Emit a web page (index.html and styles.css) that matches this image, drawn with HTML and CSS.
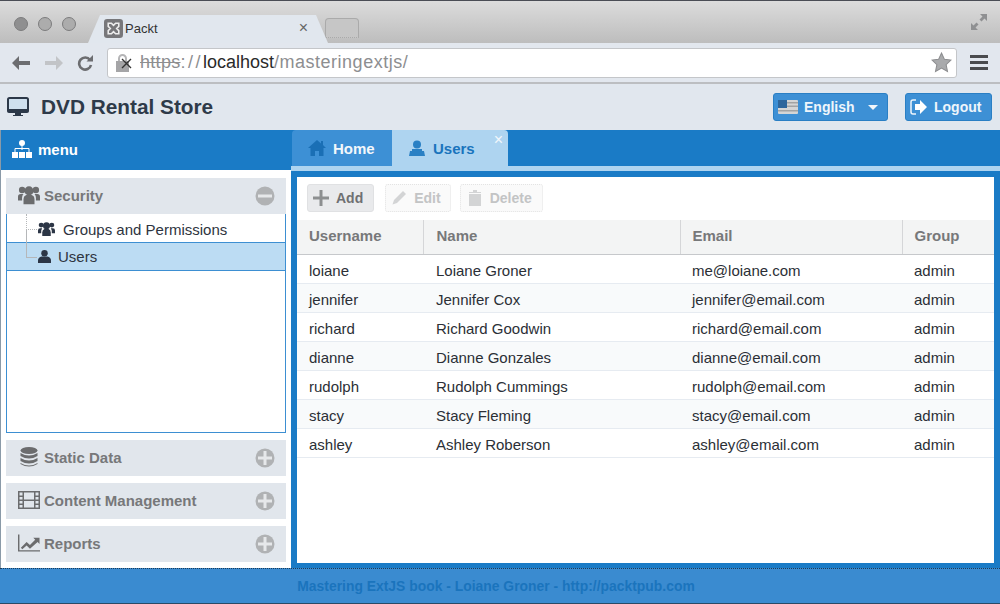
FILE: index.html
```html
<!DOCTYPE html>
<html lang="en">
<head>
    <meta charset="UTF-8">
    <title>Packt</title>
    <link rel="stylesheet" href="styles.css">
</head>
<body>
    <svg class="defs" width="0" height="0">
        <symbol id="i-group" viewBox="0 0 24 20">
            <circle cx="12" cy="5.500" r="5"/>
            <circle cx="4.500" cy="4.500" r="3.500"/>
            <circle cx="19.500" cy="4.500" r="3.500"/>
            <path d="M6 20v-5q0-4 3-5h6q3 1 3 5v5z"/>
            <path d="M0 16v-4q0-3 3-3h3q-2 2-1.500 7zM24 16v-4q0-3-3-3h-3q2 2 1.500 7z"/>
        </symbol>
        <symbol id="i-user" viewBox="0 0 14 14">
            <circle cx="7" cy="3.500" r="3.500"/>
            <path d="M0 14v-3q0-3 4-4h6q4 1 4 4v3z"/>
        </symbol>
        <symbol id="i-plus" viewBox="0 0 20 20">
            <circle cx="10" cy="10" r="9.500" fill="#b0b2b4"/>
            <path d="M8.500 3h3v5.500H17v3h-5.500V17h-3v-5.500H3v-3h5.500z" fill="#e6e8ea"/>
        </symbol>
    </svg>

    <!-- Browser chrome -->
    <div class="tabstrip">
        <div class="lights"><i></i><i></i><i></i></div>
        <div class="browser-tab">
            <svg class="favicon" viewBox="0 0 18 18"><rect width="18" height="18" rx="3" fill="#77777a"/><path d="M4 4h3l2 2 2-2h3v3l-2 2 2 2v3h-3l-2-2-2 2H4v-3l2-2-2-2z" fill="none" stroke="#eee" stroke-width="1.500"/></svg>
            <span class="browser-tab-title">Packt</span>
            <span class="browser-tab-close">×</span>
        </div>
        <div class="new-tab"></div>
        <svg class="fullscreen" viewBox="0 0 18 18"><path d="M10 1h7v7l-2.500-2.500-3 3-2-2 3-3zM8 17H1v-7l2.500 2.500 3-3 2 2-3 3z" fill="#8f9092"/></svg>
    </div>
    <div class="toolbar">
        <svg class="nav-icon" viewBox="0 0 20 16"><path d="M8 1 1 8l7 7v-5h11V6H8z" fill="#6c6d70"/></svg>
        <svg class="nav-icon" viewBox="0 0 20 16"><path d="M12 1l7 7-7 7v-5H1V6h11z" fill="#c2c4c7"/></svg>
        <svg class="nav-icon reload" viewBox="0 0 16 16"><path d="M13 5a6 6 0 1 0 1 5" fill="none" stroke="#6c6d70" stroke-width="2.600"/><path d="M9.500 6.500H16V0z" fill="#6c6d70"/></svg>
        <div class="address">
            <svg class="lock" viewBox="0 0 18 18"><rect x="1" y="7" width="13" height="11" fill="#a5a5a7"/><path d="M4 7V4.500a3.500 3.500 0 0 1 7 0V7" fill="none" stroke="#b5b5b7" stroke-width="2"/><path d="M7 5l9 9M16 5l-9 9" stroke="#333" stroke-width="1.400"/></svg>
            <span class="url"><s class="url-scheme">https</s><span class="url-sep">://</span><span class="url-host">localhost</span><span class="url-dim">/masteringextjs/</span></span>
            <svg class="star" viewBox="0 0 20 20"><path d="M10 1l2.800 6 6.200.7-4.600 4.300 1.300 6.500L10 15.300l-5.700 3.200L5.600 12 1 7.700 7.200 7z" fill="#a9aaac" stroke="#8c8d8f"/></svg>
        </div>
        <div class="hamburger"><i></i><i></i><i></i></div>
    </div>

    <!-- App header -->
    <header class="app-header">
        <svg class="logo-icon" viewBox="0 0 22 20"><rect x="1" y="1" width="20" height="13" rx="1.500" fill="#cfe0ee" stroke="#2c3848" stroke-width="2"/><path d="M0 12h22v2a2 2 0 0 1-2 2H2a2 2 0 0 1-2-2zM8 16h6v2h2v1H6v-1h2z" fill="#2c3848"/></svg>
        <h1>DVD Rental Store</h1>
        <button class="head-btn lang-btn">
            <svg class="flag" viewBox="0 0 20 14"><rect width="20" height="14" rx="1" fill="#d5d5d5"/><path d="M9 2h11v1.500H9zM9 5.500h11V7H9zM0 10h20v1.500H0z" fill="#a3a3a3"/><rect width="9" height="8" fill="#2d669c"/></svg>
            English
            <span class="caret"></span>
        </button>
        <button class="head-btn logout-btn">
            <svg class="logout-icon" viewBox="0 0 18 16"><path d="M6 1H3a2 2 0 0 0-2 2v10a2 2 0 0 0 2 2h3" fill="none" stroke="#eef5fb" stroke-width="1.500"/><path d="M5 5h5V1l7 7-7 7v-4H5z" fill="#fff"/></svg>
            Logout
        </button>
    </header>

    <!-- Viewport -->
    <div class="viewport">
        <aside class="west">
            <div class="west-title">
                <svg class="sitemap" viewBox="0 0 20 18"><circle cx="10" cy="3" r="3" fill="#fff"/><path d="M10 5v5M3 12V8.500h14V12" fill="none" stroke="#fff"/><path d="M0 12h6v6H0zM7 12h6v6H7zM14 12h6v6h-6z" fill="#fff"/></svg>
                menu
            </div>
            <div class="accordion">
                <div class="acc-head">
                    <svg class="acc-icon"><use href="#i-group"/></svg>
                    <span class="acc-title">Security</span>
                    <svg class="acc-tool" viewBox="0 0 20 20"><circle cx="10" cy="10" r="9.500" fill="#b0b2b4"/><rect x="3" y="8.500" width="14" height="3" fill="#e6e8ea"/></svg>
                </div>
                <div class="tree">
                    <div class="tree-row tree-first">
                        <svg class="tree-icon group-icon"><use href="#i-group"/></svg>
                        Groups and Permissions
                    </div>
                    <div class="tree-row tree-selected">
                        <svg class="tree-icon user-icon"><use href="#i-user"/></svg>
                        Users
                    </div>
                </div>
                <div class="acc-head">
                    <svg class="acc-icon" viewBox="0 0 18 20"><ellipse cx="9" cy="3.500" rx="8.500" ry="3.500"/><path d="M.5 6q8.500 5 17 0v3q-8.500 5-17 0zM.5 11q8.500 5 17 0v3q-8.500 5-17 0zM.5 16q8.500 5 17 0v1q-8.500 5-17 0z"/></svg>
                    <span class="acc-title">Static Data</span>
                    <svg class="acc-tool"><use href="#i-plus"/></svg>
                </div>
                <div class="acc-head">
                    <svg class="acc-icon" viewBox="0 0 22 18"><path fill-rule="evenodd" d="M0 0h22v18H0zM1.500 1.500v3h3v-3zM1.500 6v2.500h3V6zM1.500 10v2.500h3V10zM1.500 14v2.500h3V14zM6 1.500v7h10v-7zM6 10v6.500h10V10zM17.500 1.500v3h3v-3zM17.500 6v2.500h3V6zM17.500 10v2.500h3V10zM17.500 14v2.500h3V14z"/></svg>
                    <span class="acc-title">Content Management</span>
                    <svg class="acc-tool"><use href="#i-plus"/></svg>
                </div>
                <div class="acc-head">
                    <svg class="acc-icon" viewBox="0 0 23 18"><path d="M0 0h1.500v16.500H23V18H0z"/><path d="M3 14l6-6 3.500 3L18 5.500 16 3.500h6.500V10L20.500 8 12.500 15 9 11.500 4.500 15.500z"/></svg>
                    <span class="acc-title">Reports</span>
                    <svg class="acc-tool"><use href="#i-plus"/></svg>
                </div>
            </div>
        </aside>

        <main class="center">
            <div class="tabs">
                <div class="tab tab-home">
                    <svg class="tab-icon" viewBox="0 0 18 16"><path d="M9 0l4 3.500V1h2v4l3 3h-2.500v8H11v-5H7v5H2.500V8H0z" fill="#1a6fb5"/></svg>
                    Home
                </div>
                <div class="tab tab-active">
                    <svg class="tab-icon" viewBox="0 0 16 16"><circle cx="8" cy="4.500" r="4" fill="#2a80c4"/><path d="M3 9h10v2h2l1 5H0l1-5h2z" fill="#2a80c4"/></svg>
                    Users
                    <span class="tab-close">×</span>
                </div>
            </div>
            <div class="tab-strip"></div>
            <div class="panel">
                <div class="grid-toolbar">
                    <button class="tool-btn tool-on">
                        <svg class="tool-icon" viewBox="0 0 16 16"><path d="M6.500 0h3v6.500H16v3H9.500V16h-3V9.500H0v-3h6.500z" fill="#8d8f90"/></svg>
                        Add
                    </button>
                    <button class="tool-btn">
                        <svg class="tool-icon" viewBox="0 0 16 16"><path d="M12 1l3 3-9 9-4.500 1.500L3 10z" fill="#d3d4d5"/></svg>
                        Edit
                    </button>
                    <button class="tool-btn">
                        <svg class="tool-icon" viewBox="0 0 14 16"><path d="M1 4h12v12H1zM5 0h4v2h4v1H1V2h4z" fill="#d3d4d5"/></svg>
                        Delete
                    </button>
                </div>
                <table class="grid">
                    <thead>
                        <tr><th class="col-user">Username</th><th class="col-name">Name</th><th class="col-mail">Email</th><th>Group</th></tr>
                    </thead>
                    <tbody>
                        <tr><td>loiane</td><td>Loiane Groner</td><td>me@loiane.com</td><td>admin</td></tr>
                        <tr><td>jennifer</td><td>Jennifer Cox</td><td>jennifer@email.com</td><td>admin</td></tr>
                        <tr><td>richard</td><td>Richard Goodwin</td><td>richard@email.com</td><td>admin</td></tr>
                        <tr><td>dianne</td><td>Dianne Gonzales</td><td>dianne@email.com</td><td>admin</td></tr>
                        <tr><td>rudolph</td><td>Rudolph Cummings</td><td>rudolph@email.com</td><td>admin</td></tr>
                        <tr><td>stacy</td><td>Stacy Fleming</td><td>stacy@email.com</td><td>admin</td></tr>
                        <tr><td>ashley</td><td>Ashley Roberson</td><td>ashley@email.com</td><td>admin</td></tr>
                    </tbody>
                </table>
            </div>
        </main>
    </div>

    <footer class="app-footer">Mastering ExtJS book - Loiane Groner - http://packtpub.com</footer>
</body>
</html>
```

FILE: styles.css
```css
/* General page */
body {
    margin: 0;
    width: 1000px;
    height: 604px;
    overflow: hidden;
    display: flex;
    flex-direction: column;
    font-family: 'Liberation Sans', Arial, sans-serif;
    background: #fff;
}

.defs {
    position: absolute;
}

/* Browser tab strip */
.tabstrip {
    height: 43px;
    box-sizing: border-box;
    border-top: 1px solid #4a4d55;
    background: linear-gradient(to bottom, #dcdcdc, #bdbdbd);
    display: flex;
    align-items: flex-end;
    flex-shrink: 0;
}

.lights {
    display: flex;
    gap: 10px;
    padding: 0 0 12px 14px;
    width: 74px;
}

.lights i {
    width: 14px;
    height: 14px;
    border-radius: 50%;
    background: #8f8f90;
    border: 1px solid #7c7c7d;
    box-sizing: border-box;
}

.lights i + i {
    background: #acacac;
}

/* slanted sides of the tab */
.browser-tab {
    width: 240px;
    height: 28px;
    padding: 0 20px 2px 16px;
    box-sizing: border-box;
    background: #e1e7ee;
    clip-path: polygon(0 100%, 12px 0, 228px 0, 100% 100%);
    display: flex;
    align-items: center;
}

.favicon {
    width: 19px;
    height: 19px;
    margin-right: 2px;
}

.browser-tab-title {
    font: 13px 'Liberation Sans', sans-serif;
    color: #333;
    flex: 1;
}

.browser-tab-close {
    font-size: 16px;
    color: #666;
}

.new-tab {
    width: 32px;
    height: 18px;
    margin: 0 0 5px -3px;
    border: 1px solid #aaa;
    border-bottom-style: dotted;
    border-radius: 4px 4px 0 0;
    background: #c6c6c6;
}

.fullscreen {
    width: 18px;
    height: 18px;
    margin: 0 12px 12px auto;
}

/* Browser toolbar */
.toolbar {
    height: 41px;
    box-sizing: border-box;
    flex-shrink: 0;
    display: flex;
    align-items: center;
    padding: 0 12px 0 11px;
    background: #e2e7ee;
    border-bottom: 2px solid #bcbec1;
}

.nav-icon {
    width: 20px;
    height: 16px;
    margin-right: 13px;
}

.reload {
    width: 16px;
    margin-right: 14px;
}

.address {
    flex: 1;
    height: 30px;
    box-sizing: border-box;
    background: #fff;
    border: 1px solid #c4c6c9;
    border-radius: 3px;
    display: flex;
    align-items: center;
    padding: 0 4px 0 7px;
}

.lock {
    width: 18px;
    height: 18px;
    margin-right: 7px;
}

.url {
    flex: 1;
    font-size: 18px;
    letter-spacing: 0.5px;
    color: #8d8e90;
}

.url-scheme {
    color: #8d8e90;
    letter-spacing: 0.3px;
}

.url-sep {
    letter-spacing: 2.5px;
}

.url-host {
    color: #2a2a2a;
    letter-spacing: 0;
}

.star {
    width: 21px;
    height: 21px;
}

.hamburger {
    width: 18px;
    margin-left: 13px;
    display: flex;
    flex-direction: column;
    gap: 3px;
}

.hamburger i {
    height: 3px;
    background: #4a4b4e;
}

/* App header */
.app-header {
    height: 46px;
    box-sizing: border-box;
    flex-shrink: 0;
    background: #e1e7ee;
    display: flex;
    align-items: center;
    padding: 0 8px 0 7px;
}

.logo-icon {
    width: 22px;
    height: 20px;
    margin-right: 12px;
}

.app-header h1 {
    margin: 0;
    flex: 1;
    font-size: 20.800px;
    color: #2e3a49;
}

.head-btn {
    height: 28px;
    box-sizing: border-box;
    padding: 0;
    border: 1px solid #2a7fc4;
    border-radius: 3px;
    background: #3d90d5;
    color: #eef5fb;
    font: bold 14px 'Liberation Sans', sans-serif;
    display: flex;
    align-items: center;
}

.lang-btn {
    width: 115px;
    padding-left: 4px;
    margin-right: 17px;
}

.flag {
    width: 20px;
    height: 14px;
    margin-right: 6px;
}

.caret {
    border: 5px solid transparent;
    border-top: 5px solid #f0f5fa;
    border-bottom: 0;
    margin-left: 13px;
}

.logout-btn {
    width: 87px;
    padding-left: 4px;
}

.logout-icon {
    width: 18px;
    height: 16px;
    margin-right: 6px;
}

/* Main layout */
.viewport {
    flex: 1;
    display: flex;
    min-height: 0;
    background: #1a7bc6;
}

.west {
    width: 291px;
    display: flex;
    flex-direction: column;
    background: #fff;
    border-left: 1px solid #8a9aa8;
    box-sizing: border-box;
}

.west-title {
    height: 40px;
    box-sizing: border-box;
    flex-shrink: 0;
    background: #1a7bc6;
    color: #fff;
    font-weight: bold;
    font-size: 15px;
    display: flex;
    align-items: center;
    padding: 0 0 2px 11px;
}

.sitemap {
    width: 20px;
    height: 18px;
    margin-right: 6px;
}

.accordion {
    flex: 1;
    display: flex;
    flex-direction: column;
    padding: 8px 5px 6px 5px;
    gap: 7px;
}

.acc-head {
    height: 36px;
    flex-shrink: 0;
    background: #e1e6ec;
    display: flex;
    align-items: center;
    padding: 0 11px 0 12px;
    color: #77787a;
    fill: #6b6c6e;
}

.acc-icon {
    width: 22px;
    height: 20px;
    margin-right: 4px;
    margin-bottom: 3px;
}

.acc-title {
    flex: 1;
    font-size: 15px;
    font-weight: bold;
    padding-bottom: 2px;
}

.acc-tool {
    width: 20px;
    height: 20px;
}

/* Menu tree */
.tree {
    height: 219px;
    flex-shrink: 0;
    margin-top: -7px;
    box-sizing: border-box;
    border: 1px solid #3d8fd2;
    border-top: 0;
    font-size: 15px;
    color: #2e3440;
}

.tree-row {
    height: 28px;
    display: flex;
    align-items: center;
    box-sizing: border-box;
    position: relative;
    fill: #2c3646;
}

.tree-first {
    padding: 2px 0 0 31px;
}

.tree-selected {
    height: 29px;
    padding-left: 31px;
    background: #bcdcf3;
    border-top: 1px solid #3d8fd2;
    border-bottom: 1px solid #3d8fd2;
}

.tree-first::before {
    content: "";
    position: absolute;
    left: 19px;
    top: 0;
    width: 10px;
    height: 15px;
    border-left: 1px dotted #b5b7b9;
    border-bottom: 1px dotted #b5b7b9;
}

.tree-selected::before {
    content: "";
    position: absolute;
    left: 19px;
    top: -13px;
    width: 10px;
    height: 27px;
    border-left: 1px solid #b5b7b9;
    border-bottom: 1px solid #b5b7b9;
}

.tree-icon {
    margin-right: 8px;
}

.group-icon {
    width: 17px;
    height: 16px;
}

.user-icon {
    width: 13px;
    height: 13px;
    margin-right: 7px;
}

/* Center tabs */
.center {
    flex: 1;
    display: flex;
    flex-direction: column;
    min-width: 0;
}

.tabs {
    height: 36px;
    flex-shrink: 0;
    display: flex;
    padding-left: 1px;
}

.tab {
    display: flex;
    align-items: center;
    font-weight: bold;
    font-size: 15px;
    position: relative;
    box-sizing: border-box;
}

.tab-home {
    width: 100px;
    background: #3d90d5;
    color: #f2f7fb;
    padding-left: 16px;
    border-radius: 4px 0 0 0;
}

.tab-active {
    width: 116px;
    background: #aed4f0;
    color: #1a74bd;
    padding-left: 17px;
    border-radius: 0 4px 0 0;
}

.tab-icon {
    width: 18px;
    height: 16px;
    margin-right: 7px;
}

.tab-active .tab-icon {
    width: 16px;
    margin-right: 8px;
}

.tab-close {
    position: absolute;
    top: 3px;
    right: 5px;
    color: #f2f7fb;
    font-size: 16px;
    line-height: 14px;
    font-weight: normal;
}

.tab-strip {
    height: 5px;
    flex-shrink: 0;
    background: #aed4f0;
}

.panel {
    flex: 1;
    min-height: 0;
    margin-left: 1px;
    border: 5px solid #1a7bc6;
    border-right-width: 6px;
    border-top-width: 6px;
    border-radius: 5px 5px 0 0;
    background: #fff;
}

/* Grid */
.grid-toolbar {
    height: 43px;
    box-sizing: border-box;
    display: flex;
    align-items: center;
    gap: 9px;
    padding: 0 0 1px 10px;
}

.tool-btn {
    height: 28px;
    box-sizing: border-box;
    padding: 0 9px 0 5px;
    border: 1px dotted #e3e3e3;
    border-radius: 3px;
    background: #fafafa;
    color: #c3c4c5;
    font: bold 14px 'Liberation Sans', sans-serif;
    display: flex;
    align-items: center;
}

.tool-btn:last-child {
    padding: 0 10px 0 6px;
}

.tool-on {
    padding: 0 10px 0 5px;
    margin-right: 2px;
    background: #e9eaec;
    border: 1px solid #e0e1e3;
    color: #6f7072;
}

.tool-icon {
    width: 16px;
    height: 16px;
    margin-right: 7px;
}

.grid {
    width: 697px;
    border-collapse: collapse;
    table-layout: fixed;
    font-size: 15px;
}

.grid th {
    height: 34px;
    padding: 0 12px 2px;
    box-sizing: border-box;
    text-align: left;
    font-size: 15px;
    color: #77787a;
    background: #f3f4f4;
    border-left: 1px solid #d5d6d8;
    border-bottom: 1px solid #c6c8cb;
}

.grid th:first-child {
    border-left: 0;
}

.grid th:nth-child(2),
.grid td:nth-child(2) {
    padding-left: 13px;
}

.col-user {
    width: 126px;
}

.col-name {
    width: 257px;
}

.col-mail {
    width: 222px;
}

.grid td {
    height: 29px;
    padding: 3px 12px 0;
    box-sizing: border-box;
    color: #2b2f36;
    border-bottom: 1px solid #e6ebf1;
}

.grid tr:nth-child(even) td {
    background: #f8fafb;
}

/* Footer */
.app-footer {
    height: 36px;
    flex-shrink: 0;
    box-sizing: border-box;
    padding-right: 8px;
    background: #3a8bd0;
    border-top: 1px dotted #1d3b56;
    border-bottom: 1px solid #2a4a66;
    color: #1a74bd;
    font-weight: bold;
    font-size: 13.900px;
    text-align: center;
    line-height: 34px;
}
```
